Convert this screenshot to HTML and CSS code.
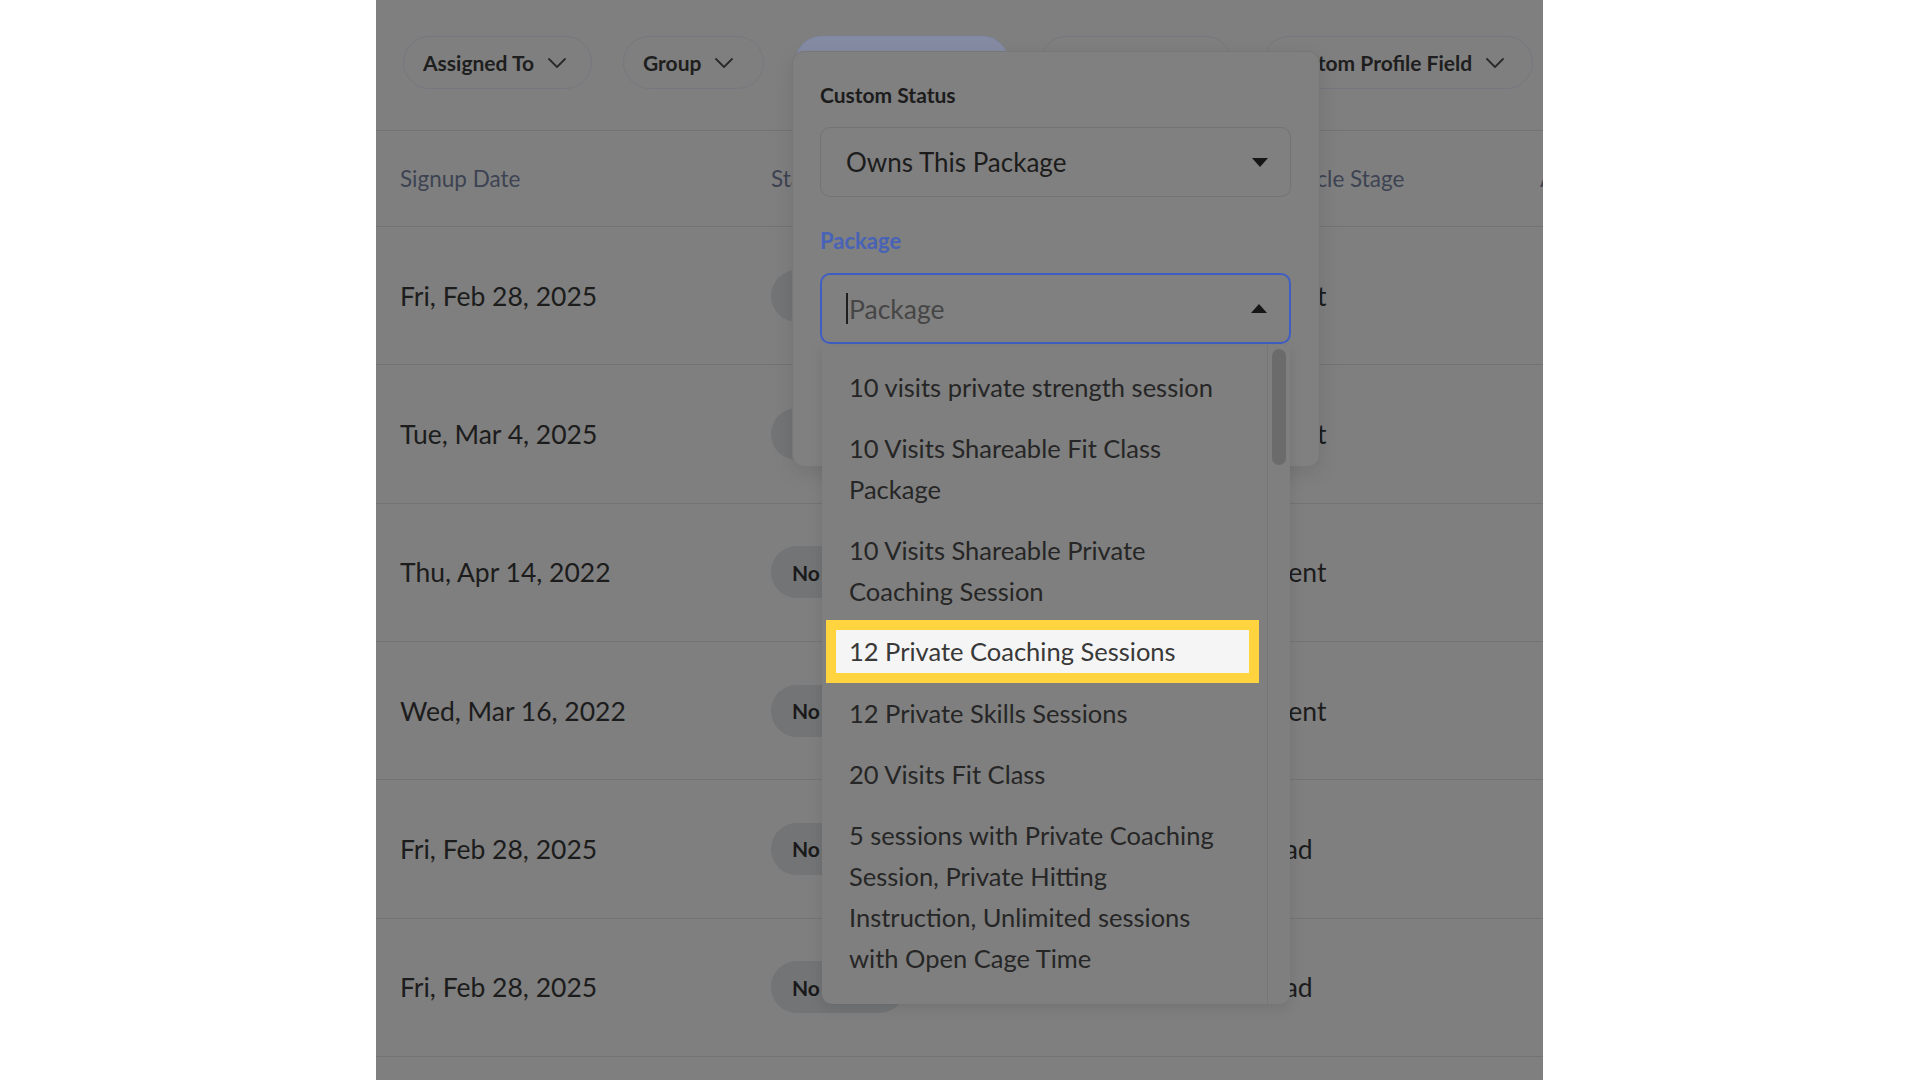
FILE: index.html
```html
<!DOCTYPE html>
<html lang="en">
<head>
<meta charset="utf-8">
<title>Contacts – Custom Status filter</title>
<link rel="stylesheet" href="styles.css">
</head>
<body>
<div class="app">
  <div class="filters">
    <div class="pill pill-assigned"><span>Assigned To</span><svg class="chev" viewBox="0 0 18 10"><polyline points="1,1 9,9 17,1"/></svg></div>
    <div class="pill pill-group"><span>Group</span><svg class="chev" viewBox="0 0 18 10"><polyline points="1,1 9,9 17,1"/></svg></div>
    <div class="pill pill-active pill-status"><span>Custom Status</span><svg class="chev" viewBox="0 0 18 10"><polyline points="1,1 9,9 17,1"/></svg></div>
    <div class="pill pill-stage"><span>Lifecycle Stage</span><svg class="chev" viewBox="0 0 18 10"><polyline points="1,1 9,9 17,1"/></svg></div>
    <div class="pill pill-profile"><span>Custom Profile Field</span><svg class="chev" viewBox="0 0 18 10"><polyline points="1,1 9,9 17,1"/></svg></div>
  </div>

  <div class="table">
    <div class="row head">
      <div class="cell">Signup Date</div>
      <div class="cell">Status</div>
      <div class="cell">Lifecycle Stage</div>
      <div class="cell">Assigned</div>
    </div>
    <div class="row">
      <div class="cell date">Fri, Feb 28, 2025</div>
      <div class="cell"><span class="status">No Status</span></div>
      <div class="cell stage">Client</div>
      <div class="cell"></div>
    </div>
    <div class="row">
      <div class="cell date">Tue, Mar 4, 2025</div>
      <div class="cell"><span class="status">No Status</span></div>
      <div class="cell stage">Client</div>
      <div class="cell"></div>
    </div>
    <div class="row">
      <div class="cell date">Thu, Apr 14, 2022</div>
      <div class="cell"><span class="status">No Status</span></div>
      <div class="cell stage">Client</div>
      <div class="cell"></div>
    </div>
    <div class="row">
      <div class="cell date">Wed, Mar 16, 2022</div>
      <div class="cell"><span class="status">No Status</span></div>
      <div class="cell stage">Client</div>
      <div class="cell"></div>
    </div>
    <div class="row">
      <div class="cell date">Fri, Feb 28, 2025</div>
      <div class="cell"><span class="status">No Status</span></div>
      <div class="cell stage">Lead</div>
      <div class="cell"></div>
    </div>
    <div class="row">
      <div class="cell date">Fri, Feb 28, 2025</div>
      <div class="cell"><span class="status">No Status</span></div>
      <div class="cell stage">Lead</div>
      <div class="cell"></div>
    </div>
    <div class="row">
      <div class="cell date"></div>
      <div class="cell"></div>
      <div class="cell"></div>
      <div class="cell"></div>
    </div>
  </div>

  <div class="popover">
    <div class="pop-title">Custom Status</div>
    <div class="select">
      <span>Owns This Package</span>
      <span class="tri-down"></span>
    </div>
    <div class="field-label">Package</div>
    <div class="input">
      <span class="text-caret"></span><span class="placeholder">Package</span>
      <span class="tri-up"></span>
    </div>
  </div>

  <div class="menu">
    <div class="options">
      <div class="option">10 visits private strength session</div>
      <div class="option">10 Visits Shareable Fit Class<br>Package</div>
      <div class="option">10 Visits Shareable Private<br>Coaching Session</div>
      <div class="option hl">12 Private Coaching Sessions</div>
      <div class="option">12 Private Skills Sessions</div>
      <div class="option">20 Visits Fit Class</div>
      <div class="option">5 sessions with Private Coaching<br>Session, Private Hitting<br>Instruction, Unlimited sessions<br>with Open Cage Time</div>
    </div>
    <div class="track"><div class="thumb"></div></div>
  </div>
</div>
</body>
</html>
```

FILE: styles.css
```css
* { box-sizing: border-box; }

html, body {
  margin: 0;
  padding: 0;
  background: #ffffff;
}

body {
  font-family: "Lato", "Liberation Sans", sans-serif;
  color: #1c1c1c;
}

.app {
  position: relative;
  width: 1167px;
  height: 1080px;
  margin-left: 376px;
  background: #7f7f7f;
  overflow: hidden;
}

/* ---------- filter pills ---------- */
.filters {
  display: flex;
  gap: 31px;
  height: 130px;
  padding: 36px 0 0 27px;
}

.pill {
  flex: none;
  display: flex;
  align-items: center;
  gap: 14px;
  height: 53px;
  padding-left: 19px;
  border: 1px solid #75787e;
  border-radius: 27px;
  font-size: 21px;
  font-weight: 700;
  color: #1e1e1e;
  white-space: nowrap;
  overflow: hidden;
}

.pill-assigned { width: 189px; }
.pill-group { width: 141px; }
.pill-status { width: 214px; }
.pill-stage { width: 192px; }
.pill-profile { width: 270px; }

.pill-active {
  background: #858ba2;
  border-color: #7e88aa;
}

.chev {
  width: 18px;
  height: 10px;
  flex: none;
}

.chev polyline {
  fill: none;
  stroke: #2a2a2a;
  stroke-width: 1.8;
  stroke-linecap: round;
  stroke-linejoin: round;
}

/* ---------- table ---------- */
.row {
  display: grid;
  grid-template-columns: 371px 487px 282px 1fr;
  align-items: center;
  height: 138.33px;
  padding-left: 24px;
  border-bottom: 1px solid #737373;
  white-space: nowrap;
}

.row.head {
  height: 97px;
  border-top: 1px solid #737373;
  font-size: 22.5px;
  color: #3d4352;
}

.date,
.stage {
  font-size: 26.5px;
  color: #1c1c1c;
}

.status {
  display: inline-flex;
  align-items: center;
  height: 52px;
  padding: 0 22px 0 21px;
  border-radius: 26px;
  background: #737476;
  font-size: 21px;
  font-weight: 700;
  color: #1a1a1a;
}

/* ---------- popover ---------- */
.popover {
  position: absolute;
  left: 416px;
  top: 51px;
  width: 528px;
  height: 416px;
  padding: 29px 28px 0 27px;
  background: #808080;
  border: 1px solid #777777;
  border-radius: 12px;
  box-shadow: 0 6px 20px rgba(0, 0, 0, 0.10);
}

.pop-title {
  height: 27px;
  line-height: 27px;
  font-size: 21px;
  font-weight: 700;
  color: #1c1c1c;
}

.select {
  display: flex;
  align-items: center;
  justify-content: space-between;
  height: 70px;
  margin-top: 19px;
  padding: 0 22px 0 25px;
  border: 1px solid #737373;
  border-radius: 10px;
  font-size: 26px;
  color: #1c1c1c;
}

.tri-down {
  width: 0;
  height: 0;
  border-left: 8px solid transparent;
  border-right: 8px solid transparent;
  border-top: 9px solid #161616;
}

.tri-up {
  width: 0;
  height: 0;
  margin-left: auto;
  border-left: 8px solid transparent;
  border-right: 8px solid transparent;
  border-bottom: 9px solid #161616;
}

.field-label {
  height: 28px;
  line-height: 28px;
  margin-top: 30px;
  font-size: 22px;
  font-weight: 700;
  color: #4863b6;
}

.input {
  display: flex;
  align-items: center;
  height: 71px;
  margin-top: 18px;
  padding: 0 22px 0 24px;
  border: 2px solid #3f5ec4;
  border-radius: 10px;
  font-size: 26.5px;
}

.text-caret {
  width: 2px;
  height: 31px;
  margin-right: 1px;
  background: #1e1e1e;
}

.placeholder {
  color: #464646;
}

/* ---------- dropdown menu ---------- */
.menu {
  position: absolute;
  left: 446px;
  top: 345px;
  width: 468px;
  height: 659px;
  display: flex;
  background: #7f7f7f;
  border-radius: 0 0 10px 10px;
  box-shadow: 0 4px 14px rgba(0, 0, 0, 0.10);
  overflow: hidden;
}

.options {
  flex: 1;
  padding-top: 12px;
}

.option {
  padding: 10px 18px 10px 27px;
  font-size: 25.5px;
  line-height: 41px;
  color: #262626;
  white-space: nowrap;
}

.option.hl {
  height: 63px;
  margin: -2px 8px 0 4px;
  padding: 0 0 0 13px;
  line-height: 43px;
  border: 10px solid #ffd43f;
  background: #f5f5f5;
  color: #383838;
}

.track {
  flex: none;
  width: 23px;
  border-left: 1px solid #767676;
}

.thumb {
  width: 14px;
  height: 116px;
  margin: 4px 0 0 4px;
  border-radius: 7px;
  background: #6b6b6b;
}
```
